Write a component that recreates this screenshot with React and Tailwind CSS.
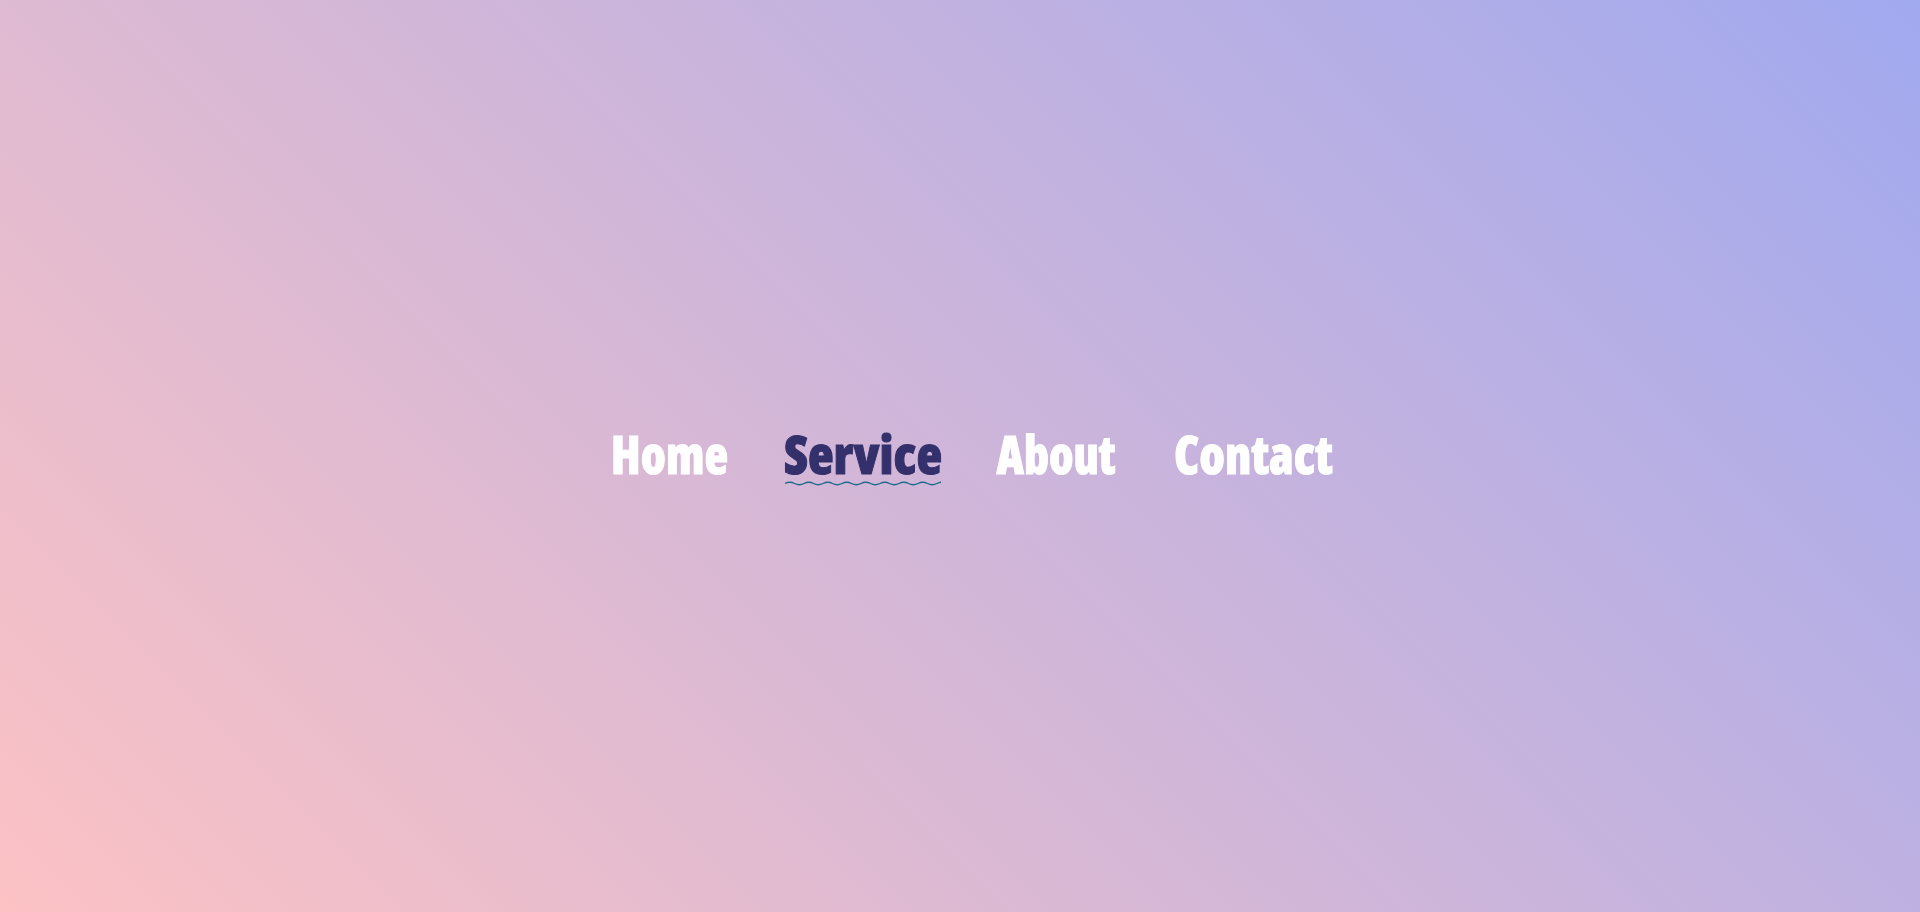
import React from "react";

function Wave() {
  const period = 19;
  const count = 9;
  let d = "M0 2.5";
  for (let i = 0; i < count; i++) {
    const x = i * period;
    d += ` Q${x + period / 4} 0 ${x + period / 2} 2.5 Q${x + (3 * period) / 4} 5 ${x + period} 2.5`;
  }
  return (
    <svg className="absolute left-0 top-[61px] w-full h-[6px]" viewBox="0 0 156 6" preserveAspectRatio="none">
      <path d={d} fill="none" stroke="#1f6a8a" strokeWidth="1.4" />
    </svg>
  );
}

const base =
  "relative flex justify-center whitespace-nowrap text-[53px] leading-[1.3] font-extrabold [font-stretch:75%] [font-family:'Open_Sans',sans-serif] [-webkit-text-stroke:1px_currentColor]";

export default function App() {
  return (
    <div className="w-full h-[912px] bg-[linear-gradient(45deg,#fcc2c4,#a1a9ef)] flex items-center justify-center">
      <nav className="flex items-center pl-[25px] mt-[-4px]">
        <a className={`${base} w-[115px] shrink-0 text-white`}>
          <span className="inline-block shrink-0 scale-x-[0.92]">Home</span>
        </a>
        <a className={`${base} w-[156px] shrink-0 ml-[58px] text-[#33306b]`}>
          <span className="inline-block shrink-0">Service</span>
          <Wave />
        </a>
        <a className={`${base} w-[119px] shrink-0 ml-[56px] text-white`}>
          <span className="inline-block shrink-0 scale-x-[0.9]">About</span>
        </a>
        <a className={`${base} w-[160px] shrink-0 ml-[57px] text-white`}>
          <span className="inline-block shrink-0 scale-x-[0.94]">Contact</span>
        </a>
      </nav>
    </div>
  );
}
